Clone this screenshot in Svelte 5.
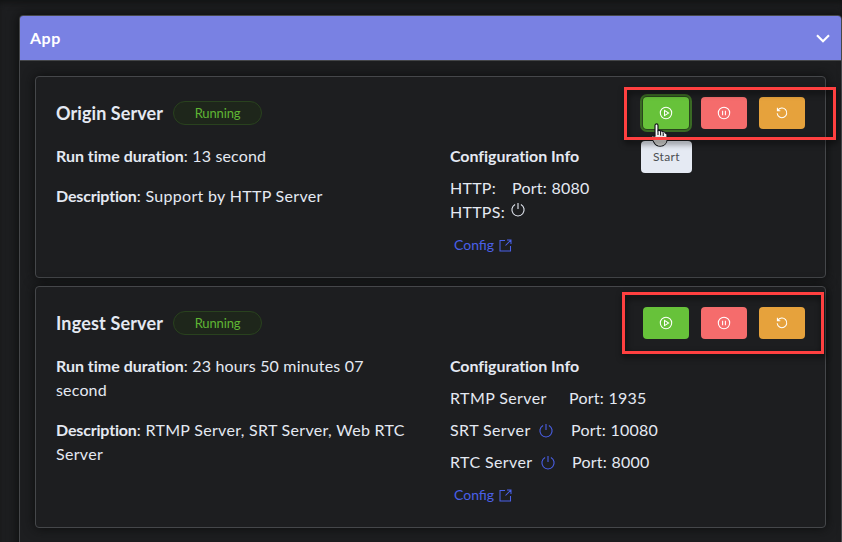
<script>
  const servers = [
    {
      name: 'Origin Server', hovered: true, height: 202,
      duration: '13 second', description: 'Support by HTTP Server',
      rows: [
        { label: 'HTTP:', port: '8080', width: 62 },
        { label: 'HTTPS:', power: 'light', width: 76 }
      ]
    },
    {
      name: 'Ingest Server', height: 242,
      duration: '23 hours 50 minutes 07 second',
      description: 'RTMP Server, SRT Server, Web RTC Server',
      rows: [
        { label: 'RTMP Server', port: '1935', width: 119 },
        { label: 'SRT Server', port: '10080', power: 'blue', width: 121 },
        { label: 'RTC Server', port: '8000', power: 'blue', width: 122 }
      ]
    }
  ];
</script>

<main>
  <section class="panel">
    <header>
      <b class="app">App</b>
      <svg width="14" height="9" viewBox="0 0 14 9"><path d="M1 1.2 7 7.2 13 1.2" fill="none" stroke="#fff" stroke-width="2.1" /></svg>
    </header>
    <div class="body">
      {#each servers as s, i}
        <article class="card card{i}" style:height="{s.height}px">
          <div class="top">
            <h2>{s.name}</h2>
            <span class="tag">Running</span>
            <div class="actions">
              <button class="start" class:hovered={s.hovered} aria-label="Start">
                <svg width="14" height="14" viewBox="0 0 14 14"><circle cx="7" cy="7" r="5.7" /><path d="M5.5 4.4v5.2L9.6 7z" /></svg>
              </button>
              <button class="pause" aria-label="Pause">
                <svg width="14" height="14" viewBox="0 0 14 14"><circle cx="7" cy="7" r="5.7" /><path d="M5.6 4.8v4.4M8.4 4.8v4.4" /></svg>
              </button>
              <button class="restart" aria-label="Restart">
                <svg width="14" height="14" viewBox="0 0 14 14"><path d="M2.8 4.5A4.8 4.8 0 1 1 2.2 7.3M2.4 1.8v2.9h2.9" /></svg>
              </button>
            </div>
          </div>
          <div class="cols">
            <div class="left">
              <p class="dur"><b>Run time duration</b>: {s.duration}</p>
              <p class="desc"><b>Description</b>: {s.description}</p>
            </div>
            <div class="right">
              <b class="conf">Configuration Info</b>
              <div class="rows">
                {#each s.rows as r}
                  <div class="row">
                    <span class="label" style:width="{r.width}px">
                      <span class="name">{r.label}</span>
                      {#if r.power}
                        <svg class="power {r.power}" width="16" height="16" viewBox="0 0 16 16"><path d="M5.1 2.5a6.1 6.1 0 1 0 5.8 0M8 1v6" /></svg>
                      {/if}
                    </span>
                    {#if r.port}<span class="port">Port: {r.port}</span>{/if}
                  </div>
                {/each}
              </div>
              <a href="#config">Config
                <svg width="13" height="13" viewBox="0 0 13 13"><path d="M6 1.5H1v10.5h10.5V7M8 1h4v4M12 1 6.5 6.5" /></svg>
              </a>
            </div>
          </div>
        </article>
      {/each}
    </div>
  </section>
  <div class="tooltip">Start</div>
  <svg class="hand" width="18" height="25" viewBox="0 0 18 25">
    <path d="M4 13V2.6C4 .4 7 .4 7 2.6v5c1-.6 2.2-.3 2.5.6 1-.5 2.2-.1 2.5.8 1-.4 2.2.1 2.4 1.2 1 0 1.6.6 1.6 1.6v4.4c0 4-2.9 7-6.8 7-3.1 0-5.2-1.9-6.4-4.2L.9 14.6c-.7-1.7 1.2-2.6 2.1-1.3z" fill="#fff" stroke="#15171c" stroke-width="1.2" />
    <path d="M1.4 16h14v1.2c0 3.5-2.6 5.3-6.1 5.3-3 0-4.8-1.7-6-3.8z" fill="#d5d5d3" />
    <path d="M7 7.5v4.5M9.6 8.5v4M12.2 10v3" stroke="#15171c" stroke-width="1.1" />
  </svg>
  <div class="mark first"></div>
  <div class="mark second"></div>
</main>

<style>
  :global(body) { margin: 0; background: #1d1e20; overflow: hidden; }
  main { position: relative; width: 842px; height: 542px; overflow: hidden; box-sizing: border-box; padding: 15px 0 0 19px; background: #1d1e20; box-shadow: inset 0 5px 7px -3px #101111; color: #e4e9f2; font: 16px/24px Lato, sans-serif; }
  .panel { box-sizing: border-box; width: 823px; height: 560px; border: 1px solid #45474a; border-radius: 4px; box-shadow: 0 0 12px #090a0a; }
  header { height: 44px; padding: 0 11px 0 10px; display: flex; align-items: center; justify-content: space-between; background: #7981e3; border-bottom: 1px solid #45474a; border-radius: 3px 3px 0 0; color: #fff; }
  .app { letter-spacing: .5px; }
  .body { padding: 15px; display: flex; flex-direction: column; gap: 8px; }
  .card { box-sizing: border-box; width: 791px; border: 1px solid #45474a; border-radius: 4px; padding: 20px; background: #1d1e20; box-shadow: 0 0 12px #0b0c0c; }
  .top { height: 32px; display: flex; align-items: center; }
  h2 { margin: 0; width: 107px; font-size: 18px; line-height: 24px; font-weight: 700; letter-spacing: .08px; white-space: nowrap; }
  .card1 h2 { letter-spacing: .16px; }
  .tag { margin-left: 10px; box-sizing: border-box; width: 89px; height: 24px; border: 1px solid #29421e; border-radius: 12px; background: #1e261b; color: #5fb534; font-size: 13px; line-height: 22px; text-align: center; letter-spacing: -.15px; }
  .actions { display: flex; gap: 12px; margin-left: auto; }
  button { width: 46px; height: 32px; padding: 0; border: 0; border-radius: 4px; display: grid; place-items: center; }
  button svg { fill: none; stroke: #fff; stroke-width: 1.05; }
  .start { background: #67c23a; }
  .pause { background: #f56c6c; }
  .restart { background: #e6a23c; }
  .hovered { box-shadow: 0 0 0 1px #29451d, 0 0 0 3px #3a6a24; }
  .cols { display: flex; padding-top: 15px; }
  .left { width: 352px; margin-right: 42px; }
  p { margin: 0 0 16px; }
  .dur { letter-spacing: .17px; }
  .dur b { letter-spacing: -.01px; }
  .desc { letter-spacing: .31px; }
  .desc b { letter-spacing: -.17px; }
  .conf { letter-spacing: -.05px; }
  .right { display: flex; flex-direction: column; align-items: flex-start; }
  .rows { margin-top: 8px; }
  .row { display: flex; height: 24px; align-items: center; white-space: nowrap; }
  .card1 .rows { margin-top: 4px; }
  .card1 .row { height: 32px; }
  .name, .port { letter-spacing: .25px; }
  .card1 .name { letter-spacing: .4px; }
  .label { display: flex; align-items: center; gap: 5px; }
  .card1 .label { gap: 7px; }
  .power { flex: none; fill: none; stroke: #e4e9f2; stroke-width: 1.1; }
  .light { margin-top: -4px; }
  .blue { stroke: #4a60e8; margin-top: 2px; }
  a { margin: 9px 0 0 4px; display: flex; align-items: center; gap: 5px; font-size: 14px; color: #4a60e8; text-decoration: none; }
  .card1 a { margin-top: 5px; }
  a svg { fill: none; stroke: #4a60e8; stroke-width: 1.05; }
  .tooltip { position: absolute; left: 641px; top: 141px; width: 51px; height: 32px; border-radius: 4px; background: #e5eaf3; color: #4c4e52; font-size: 12px; line-height: 32px; text-align: center; letter-spacing: .35px; }
  .hand { position: absolute; left: 651px; top: 123px; }
  .mark { position: absolute; box-sizing: border-box; border: 3px solid #ff4040; filter: drop-shadow(1px 3px 3px #000b); }
  .first { left: 624px; top: 87px; width: 212px; height: 53px; }
  .second { left: 622px; top: 292px; width: 202px; height: 62px; }
</style>
